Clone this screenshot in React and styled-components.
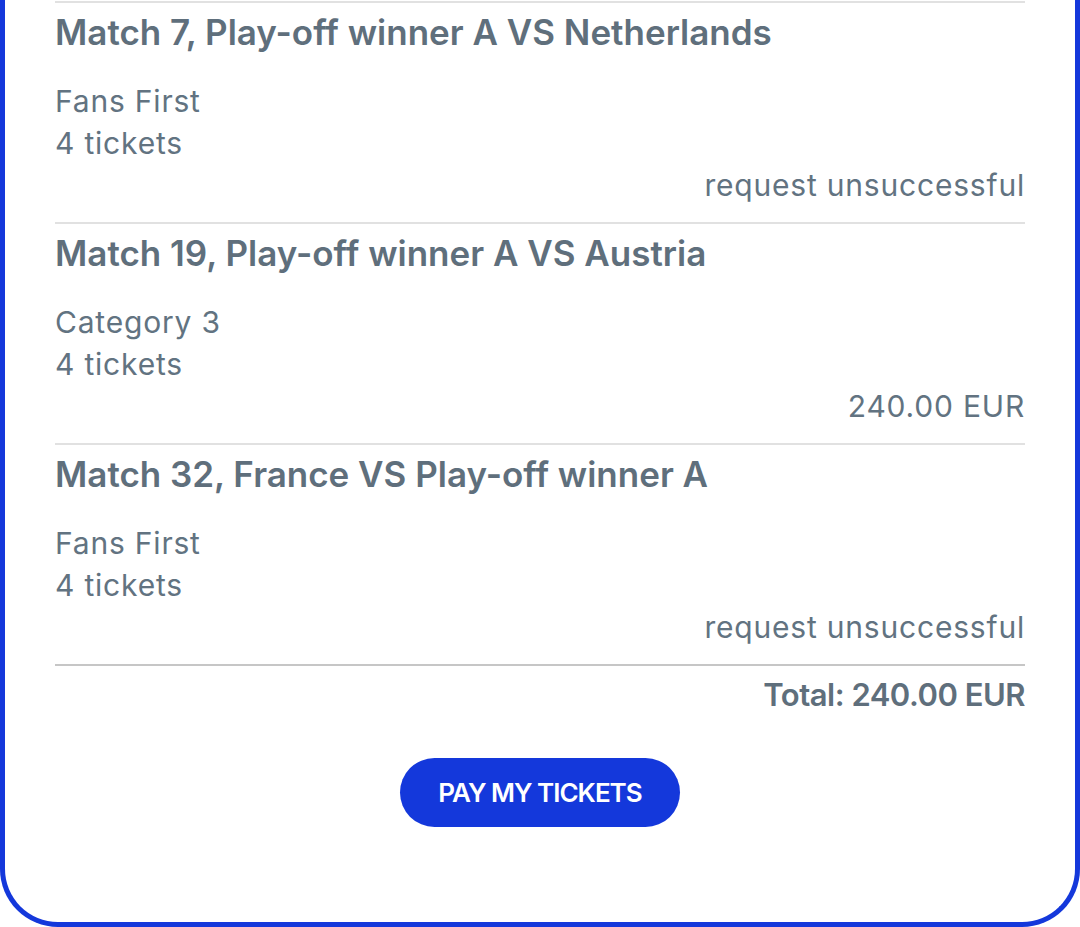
import React from "react";
import styled, { createGlobalStyle } from "styled-components";

const GlobalStyle = createGlobalStyle`
  html, body {
    margin: 0;
    padding: 0;
    background: #ffffff;
  }
  body {
    font-family: Inter, "Noto Sans", sans-serif;
    color: #607180;
  }
`;

const Card = styled.section`
  box-sizing: border-box;
  height: 927px;
  border: 5px solid #1438db;
  border-top: none;
  border-radius: 0 0 58px 58px;
  padding: 1px 50px 0;
  background: #ffffff;
  display: flex;
  flex-direction: column;
`;

const Match = styled.div`
  border-top: 2px solid #e1e1e1;
  padding-bottom: 16px;
  display: flex;
  flex-direction: column;
`;

const Title = styled.h2`
  margin: 0 0 19px;
  font-size: 35px;
  line-height: 58px;
  font-weight: 600;
  letter-spacing: 0px;
  color: #5f6f7c;
`;

const Line = styled.div`
  font-size: 30px;
  line-height: 42px;
  font-weight: 400;
  letter-spacing: 0.8px;
  color: #627381;
  text-align: ${(p) => (p.$right ? "right" : "left")};
`;

const TotalRow = styled.div`
  border-top: 2px solid #c6c6c6;
  padding-top: 8px;
  text-align: right;
  font-size: 31px;
  line-height: 42px;
  font-weight: 600;
  letter-spacing: -0.5px;
  color: #5f6f7c;
`;

const Actions = styled.div`
  display: flex;
  justify-content: center;
  margin-top: 42px;
`;

const PayButton = styled.button`
  width: 280px;
  height: 69px;
  border: none;
  border-radius: 35px;
  background: #1438db;
  color: #ffffff;
  font-family: Inter, "Noto Sans", sans-serif;
  font-size: 26px;
  font-weight: 600;
  letter-spacing: -1px;
  cursor: pointer;
`;

const matches = [
  {
    title: "Match 7, Play-off winner A VS Netherlands",
    category: "Fans First",
    tickets: "4 tickets",
    status: "request unsuccessful",
  },
  {
    title: "Match 19, Play-off winner A VS Austria",
    category: "Category 3",
    tickets: "4 tickets",
    status: "240.00 EUR",
  },
  {
    title: "Match 32, France VS Play-off winner A",
    category: "Fans First",
    tickets: "4 tickets",
    status: "request unsuccessful",
  },
];

const App = () => (
  <>
    <GlobalStyle />
    <Card>
      {matches.map((m, i) => (
        <Match key={i}>
          <Title>{m.title}</Title>
          <Line>{m.category}</Line>
          <Line>{m.tickets}</Line>
          <Line $right>{m.status}</Line>
        </Match>
      ))}
      <TotalRow>Total: 240.00 EUR</TotalRow>
      <Actions>
        <PayButton>PAY MY TICKETS</PayButton>
      </Actions>
    </Card>
  </>
);

export default App;
